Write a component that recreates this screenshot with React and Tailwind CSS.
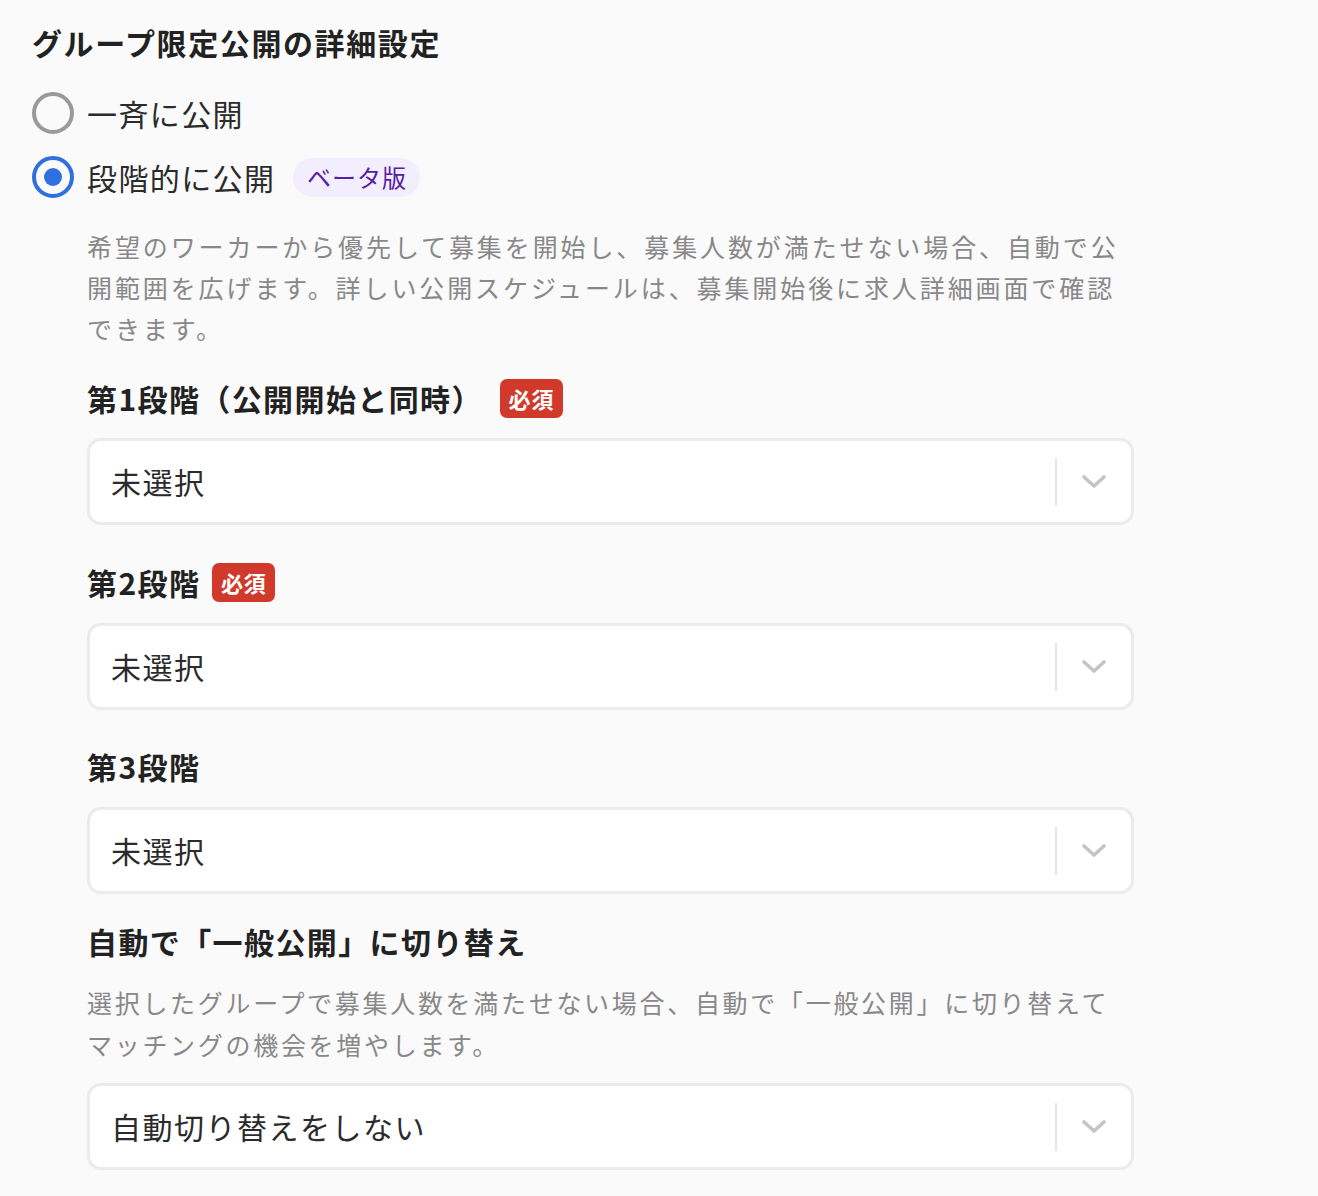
import React from "react";

const FONT = { fontFamily: '"Hiragino Sans", "Noto Sans CJK JP", "Noto Sans", sans-serif' };

function Radio({ checked }) {
  return checked ? (
    <span className="w-[42px] h-[42px] rounded-full border-[4px] border-[#2f6fdf] flex items-center justify-center shrink-0">
      <span className="w-[18px] h-[18px] rounded-full bg-[#2f6fdf]" />
    </span>
  ) : (
    <span className="w-[42px] h-[42px] rounded-full border-[4px] border-[#9a9a9a] shrink-0" />
  );
}

function Required({ gap = "ml-3" }) {
  return (
    <span className={`${gap} inline-flex items-center justify-center h-[39px] w-[63px] rounded-[7px] bg-[#d13a2b] text-white text-[22px] font-bold tracking-[0.04em]`}>
      必須
    </span>
  );
}

function Label({ children, required, gap, className = "" }) {
  return (
    <div className={`flex items-center h-10 ${className}`}>
      <span className="text-[30px] font-bold leading-10 tracking-[1.4px] text-[#222]">{children}</span>
      {required && <Required gap={gap} />}
    </div>
  );
}

function Select({ value, className = "" }) {
  return (
    <div className={`w-[1047px] h-[87px] rounded-[14px] border-[3px] border-[#ebebeb] bg-white flex items-center ${className}`}>
      <span className="flex-1 pl-[21px] text-[30px] tracking-[1.5px] text-[#2b2b2b]">{value}</span>
      <span className="w-[2px] h-[48px] bg-[#e6e6e6]" />
      <span className="w-[74px] flex items-center justify-center">
        <svg width="26" height="15" viewBox="0 0 26 15" fill="none">
          <polyline points="3,3 13,12 23,3" stroke="#c4c4c4" strokeWidth="3.6" strokeLinecap="round" strokeLinejoin="round" />
        </svg>
      </span>
    </div>
  );
}

export default function App() {
  return (
    <div className="min-h-screen bg-[#fafafa] pl-8 pt-5" style={FONT}>
      <h2 className="text-[30px] font-bold leading-[45px] tracking-[1.6px] text-[#222]">グループ限定公開の詳細設定</h2>

      <div className="mt-6 flex flex-col gap-4">
        <label className="flex items-center h-12 gap-[13px]">
          <Radio />
          <span className="text-[30px] tracking-[1.4px] text-[#2b2b2b]">一斉に公開</span>
        </label>
        <label className="flex items-center h-12 gap-[13px]">
          <Radio checked />
          <span className="text-[30px] tracking-[1.4px] text-[#2b2b2b]">段階的に公開</span>
          <span className="ml-[5px] inline-flex items-center justify-center h-[39px] w-[127px] rounded-full bg-[#f3eefd] text-[#5520a3] text-[24px] tracking-[1px]">
            ベータ版
          </span>
        </label>
      </div>

      <div className="pl-[55px]">
        <p className="mt-[25px] w-[1060px] text-[25px] leading-[41px] tracking-[2.9px] text-[#888]">
          希望のワーカーから優先して募集を開始し、募集人数が満たせない場合、自動で公<br />
          開範囲を広げます。詳しい公開スケジュールは、募集開始後に求人詳細画面で確認<br />
          できます。
        </p>

        <Label required gap="ml-[17px]" className="mt-[29px]">第1段階（公開開始と同時）</Label>
        <Select value="未選択" className="mt-5" />

        <Label required className="mt-[37px]">第2段階</Label>
        <Select value="未選択" className="mt-[21px]" />

        <Label className="mt-[36px]">第3段階</Label>
        <Select value="未選択" className="mt-[21px]" />

        <Label className="mt-[27px]">自動で「一般公開」に切り替え</Label>
        <p className="mt-5 w-[1060px] text-[25px] leading-[42px] tracking-[2.7px] text-[#888]">
          選択したグループで募集人数を満たせない場合、自動で「一般公開」に切り替えて<br />
          マッチングの機会を増やします。
        </p>
        <Select value="自動切り替えをしない" className="mt-[18px]" />
      </div>
    </div>
  );
}
